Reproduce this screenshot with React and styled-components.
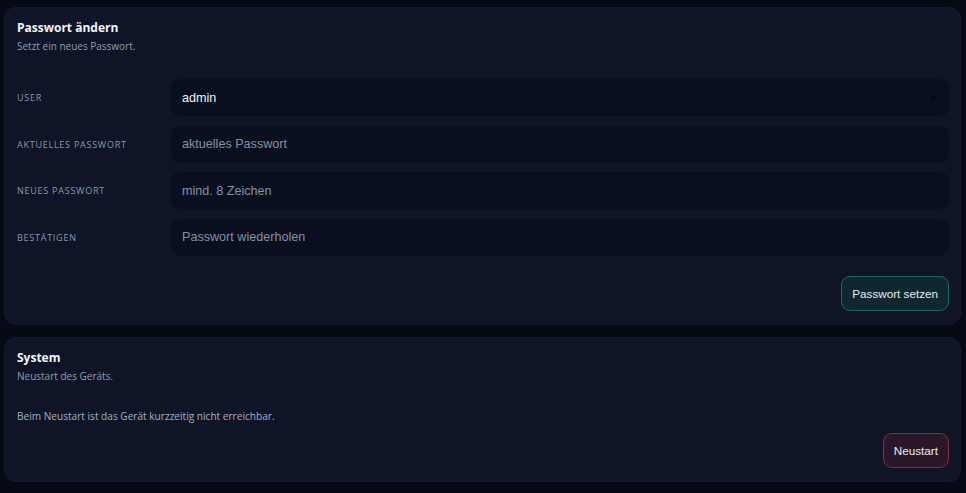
import React from "react";
import styled, { createGlobalStyle } from "styled-components";

const GlobalStyle = createGlobalStyle`
  html, body {
    margin: 0;
    padding: 0;
    background: #060a15;
  }
  body {
    font-family: "Open Sans", "Noto Sans", sans-serif;
  }
`;

const Page = styled.div`
  display: flex;
  flex-direction: column;
  gap: 12px;
  padding: 7px 5px 12px 4px;
`;

const Card = styled.section`
  background: #0f1527;
  border: 1px solid #141b2e;
  border-radius: 12px;
  padding: 11px 11px ${p => p.$bottom || 13}px 12px;
  display: flex;
  flex-direction: column;
`;

const Title = styled.h2`
  margin: 0;
  font-size: 12px;
  line-height: 18px;
  font-weight: 700;
  color: #f1f4fa;
`;

const Subtitle = styled.p`
  margin: 1px 0 0;
  font-size: 10px;
  line-height: 16px;
  color: #8d9cb5;
`;

const Form = styled.div`
  display: flex;
  flex-direction: column;
  gap: 9.5px;
  margin-top: 25px;
`;

const Row = styled.label`
  display: grid;
  grid-template-columns: 154px 1fr;
  align-items: center;
`;

const Label = styled.span`
  font-size: 9px;
  letter-spacing: 0.75px;
  text-transform: uppercase;
  color: #8797b0;
`;

const Field = styled.div`
  position: relative;
  display: flex;
  align-items: center;
  height: 37px;
  padding: 0 11px;
  background: #0a0f1f;
  border-radius: 9px;
  font-family: "Liberation Sans", Arial, sans-serif;
  font-size: 12.6px;
  color: ${p => (p.$placeholder ? "#8391a8" : "#eef2f8")};
`;

const Chevron = styled.svg`
  position: absolute;
  right: 12px;
  top: 15px;
`;

const Actions = styled.div`
  display: flex;
  justify-content: flex-end;
  margin-top: ${p => p.$top || 20}px;
`;

const Button = styled.button`
  height: 35px;
  padding: 0 10px;
  border-radius: 9px;
  font-family: "Liberation Sans", Arial, sans-serif;
  font-size: 11.7px;
  color: #e6ebf3;
  background: ${p => (p.$danger ? "#2a1828" : "#0f2830")};
  border: 1px solid ${p => (p.$danger ? "#8a2a38" : "#1b6a59")};
  cursor: pointer;
`;

const Note = styled.p`
  margin: 24px 0 0;
  font-size: 10.1px;
  line-height: 16px;
  color: #a3b0c4;
`;

const fields = [
  { label: "User", value: "admin", select: true },
  { label: "Aktuelles Passwort", value: "aktuelles Passwort" },
  { label: "Neues Passwort", value: "mind. 8 Zeichen" },
  { label: "Bestätigen", value: "Passwort wiederholen" },
];

const App = () => {
  return (
    <>
      <GlobalStyle />
      <Page>
        <Card $bottom={13}>
          <Title>Passwort ändern</Title>
          <Subtitle>Setzt ein neues Passwort.</Subtitle>
          <Form>
            {fields.map(f => (
              <Row key={f.label}>
                <Label>{f.label}</Label>
                <Field $placeholder={!f.select}>
                  {f.value}
                  {f.select && (
                    <Chevron width="8" height="6" viewBox="0 0 8 6">
                      <path
                        d="M1 1.5 L4 4.5 L7 1.5"
                        fill="none"
                        stroke="#05070c"
                        strokeWidth="1.6"
                      />
                    </Chevron>
                  )}
                </Field>
              </Row>
            ))}
          </Form>
          <Actions>
            <Button>Passwort setzen</Button>
          </Actions>
        </Card>
        <Card $bottom={13}>
          <Title>System</Title>
          <Subtitle>Neustart des Geräts.</Subtitle>
          <Note>Beim Neustart ist das Gerät kurzzeitig nicht erreichbar.</Note>
          <Actions $top={9}>
            <Button $danger>Neustart</Button>
          </Actions>
        </Card>
      </Page>
    </>
  );
};

export default App;
